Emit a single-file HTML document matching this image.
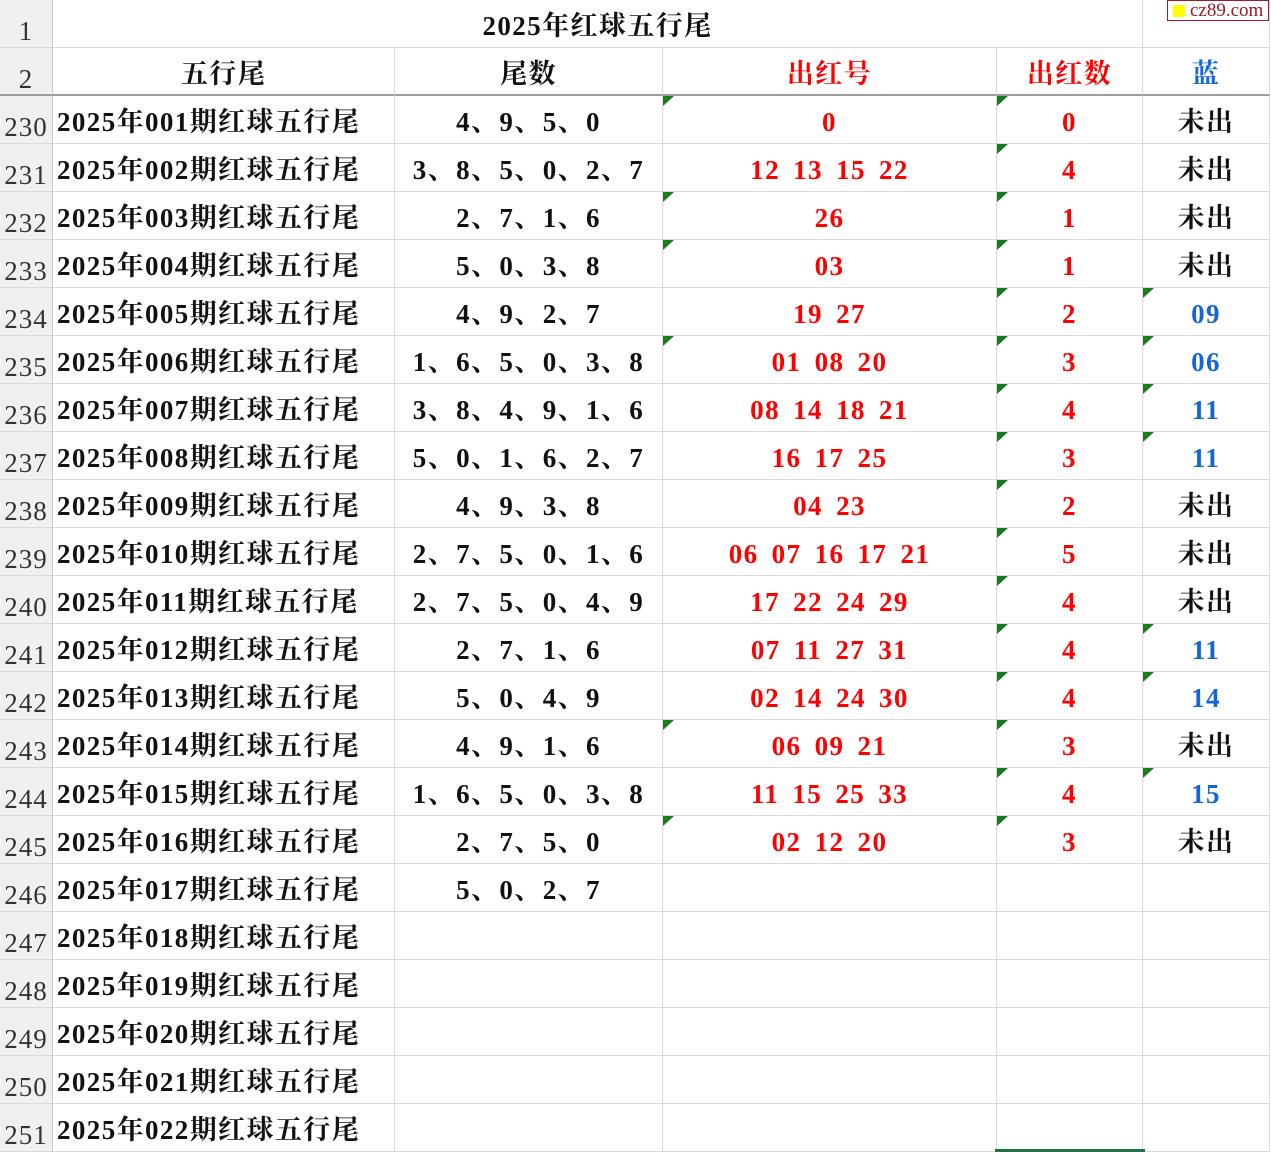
<!DOCTYPE html>
<html><head><meta charset="utf-8"><style>
*{margin:0;padding:0;box-sizing:border-box}
body{width:1271px;height:1152px;overflow:hidden;background:#fff;font-family:"Liberation Serif","Noto Serif CJK SC",serif;position:relative}
.g{display:grid;grid-template-columns:53px 342px 268px 334px 146px 127px;grid-auto-rows:48px;width:1271px}
.g>div{border-right:1px solid #dadada;border-bottom:1px solid #dadada;position:relative;text-align:center;font-size:27px;font-weight:bold;letter-spacing:1.4px;color:#111;white-space:pre;line-height:53px;height:48px;overflow:visible}
.g>div.h{background:#f0f0f0;color:#333;font-size:27px;font-weight:normal;letter-spacing:1px;border-right:1px solid #c8c8c8;line-height:62px}
.g>div.l{text-align:left;padding-left:4px}
.r{color:#f00!important;word-spacing:5px}.b{color:#1366d6!important}
.t::before{content:"";position:absolute;left:0;top:0;border-top:10px solid #1a7a1a;border-right:11px solid transparent}
.span{grid-column:2/6}
.logo{position:absolute;left:1167px;top:0;width:102px;height:21px;border:1px solid #a0182a;background:#fff;font-size:19px;color:#a0182a;line-height:19px;padding-left:22px;font-family:"Liberation Serif",serif}
.logo::before{content:"";position:absolute;left:5px;top:4px;width:12px;height:12px;background:#ffff00}
.bar{position:absolute;left:995px;top:1149px;width:150px;height:3px;background:#217346}
.k{border-bottom:2px solid #9c9c9c!important}
</style></head><body>
<div class="g">
<div class="h">1</div><div class="span">2025年红球五行尾</div><div></div>
<div class="h k">2</div><div class="k">五行尾</div><div class="k">尾数</div><div class="r k">出红号</div><div class="r k">出红数</div><div class="b k">蓝</div>

<div class="h">230</div><div class="l">2025年001期红球五行尾</div><div>4、9、5、0</div><div class="r t">0</div><div class="r t">0</div><div>未出</div>
<div class="h">231</div><div class="l">2025年002期红球五行尾</div><div>3、8、5、0、2、7</div><div class="r">12 13 15 22</div><div class="r t">4</div><div>未出</div>
<div class="h">232</div><div class="l">2025年003期红球五行尾</div><div>2、7、1、6</div><div class="r t">26</div><div class="r t">1</div><div>未出</div>
<div class="h">233</div><div class="l">2025年004期红球五行尾</div><div>5、0、3、8</div><div class="r t">03</div><div class="r t">1</div><div>未出</div>
<div class="h">234</div><div class="l">2025年005期红球五行尾</div><div>4、9、2、7</div><div class="r">19 27</div><div class="r t">2</div><div class="b t">09</div>
<div class="h">235</div><div class="l">2025年006期红球五行尾</div><div>1、6、5、0、3、8</div><div class="r t">01 08 20</div><div class="r t">3</div><div class="b t">06</div>
<div class="h">236</div><div class="l">2025年007期红球五行尾</div><div>3、8、4、9、1、6</div><div class="r">08 14 18 21</div><div class="r t">4</div><div class="b t">11</div>
<div class="h">237</div><div class="l">2025年008期红球五行尾</div><div>5、0、1、6、2、7</div><div class="r">16 17 25</div><div class="r t">3</div><div class="b t">11</div>
<div class="h">238</div><div class="l">2025年009期红球五行尾</div><div>4、9、3、8</div><div class="r">04 23</div><div class="r t">2</div><div>未出</div>
<div class="h">239</div><div class="l">2025年010期红球五行尾</div><div>2、7、5、0、1、6</div><div class="r">06 07 16 17 21</div><div class="r t">5</div><div>未出</div>
<div class="h">240</div><div class="l">2025年011期红球五行尾</div><div>2、7、5、0、4、9</div><div class="r">17 22 24 29</div><div class="r t">4</div><div>未出</div>
<div class="h">241</div><div class="l">2025年012期红球五行尾</div><div>2、7、1、6</div><div class="r">07 11 27 31</div><div class="r t">4</div><div class="b t">11</div>
<div class="h">242</div><div class="l">2025年013期红球五行尾</div><div>5、0、4、9</div><div class="r">02 14 24 30</div><div class="r t">4</div><div class="b t">14</div>
<div class="h">243</div><div class="l">2025年014期红球五行尾</div><div>4、9、1、6</div><div class="r t">06 09 21</div><div class="r t">3</div><div>未出</div>
<div class="h">244</div><div class="l">2025年015期红球五行尾</div><div>1、6、5、0、3、8</div><div class="r">11 15 25 33</div><div class="r t">4</div><div class="b t">15</div>
<div class="h">245</div><div class="l">2025年016期红球五行尾</div><div>2、7、5、0</div><div class="r t">02 12 20</div><div class="r t">3</div><div>未出</div>
<div class="h">246</div><div class="l">2025年017期红球五行尾</div><div>5、0、2、7</div><div></div><div></div><div></div>
<div class="h">247</div><div class="l">2025年018期红球五行尾</div><div></div><div></div><div></div><div></div>
<div class="h">248</div><div class="l">2025年019期红球五行尾</div><div></div><div></div><div></div><div></div>
<div class="h">249</div><div class="l">2025年020期红球五行尾</div><div></div><div></div><div></div><div></div>
<div class="h">250</div><div class="l">2025年021期红球五行尾</div><div></div><div></div><div></div><div></div>
<div class="h">251</div><div class="l">2025年022期红球五行尾</div><div></div><div></div><div></div><div></div>
</div>
<div class="logo">cz89.com</div>
<div class="bar"></div>
</body></html>
